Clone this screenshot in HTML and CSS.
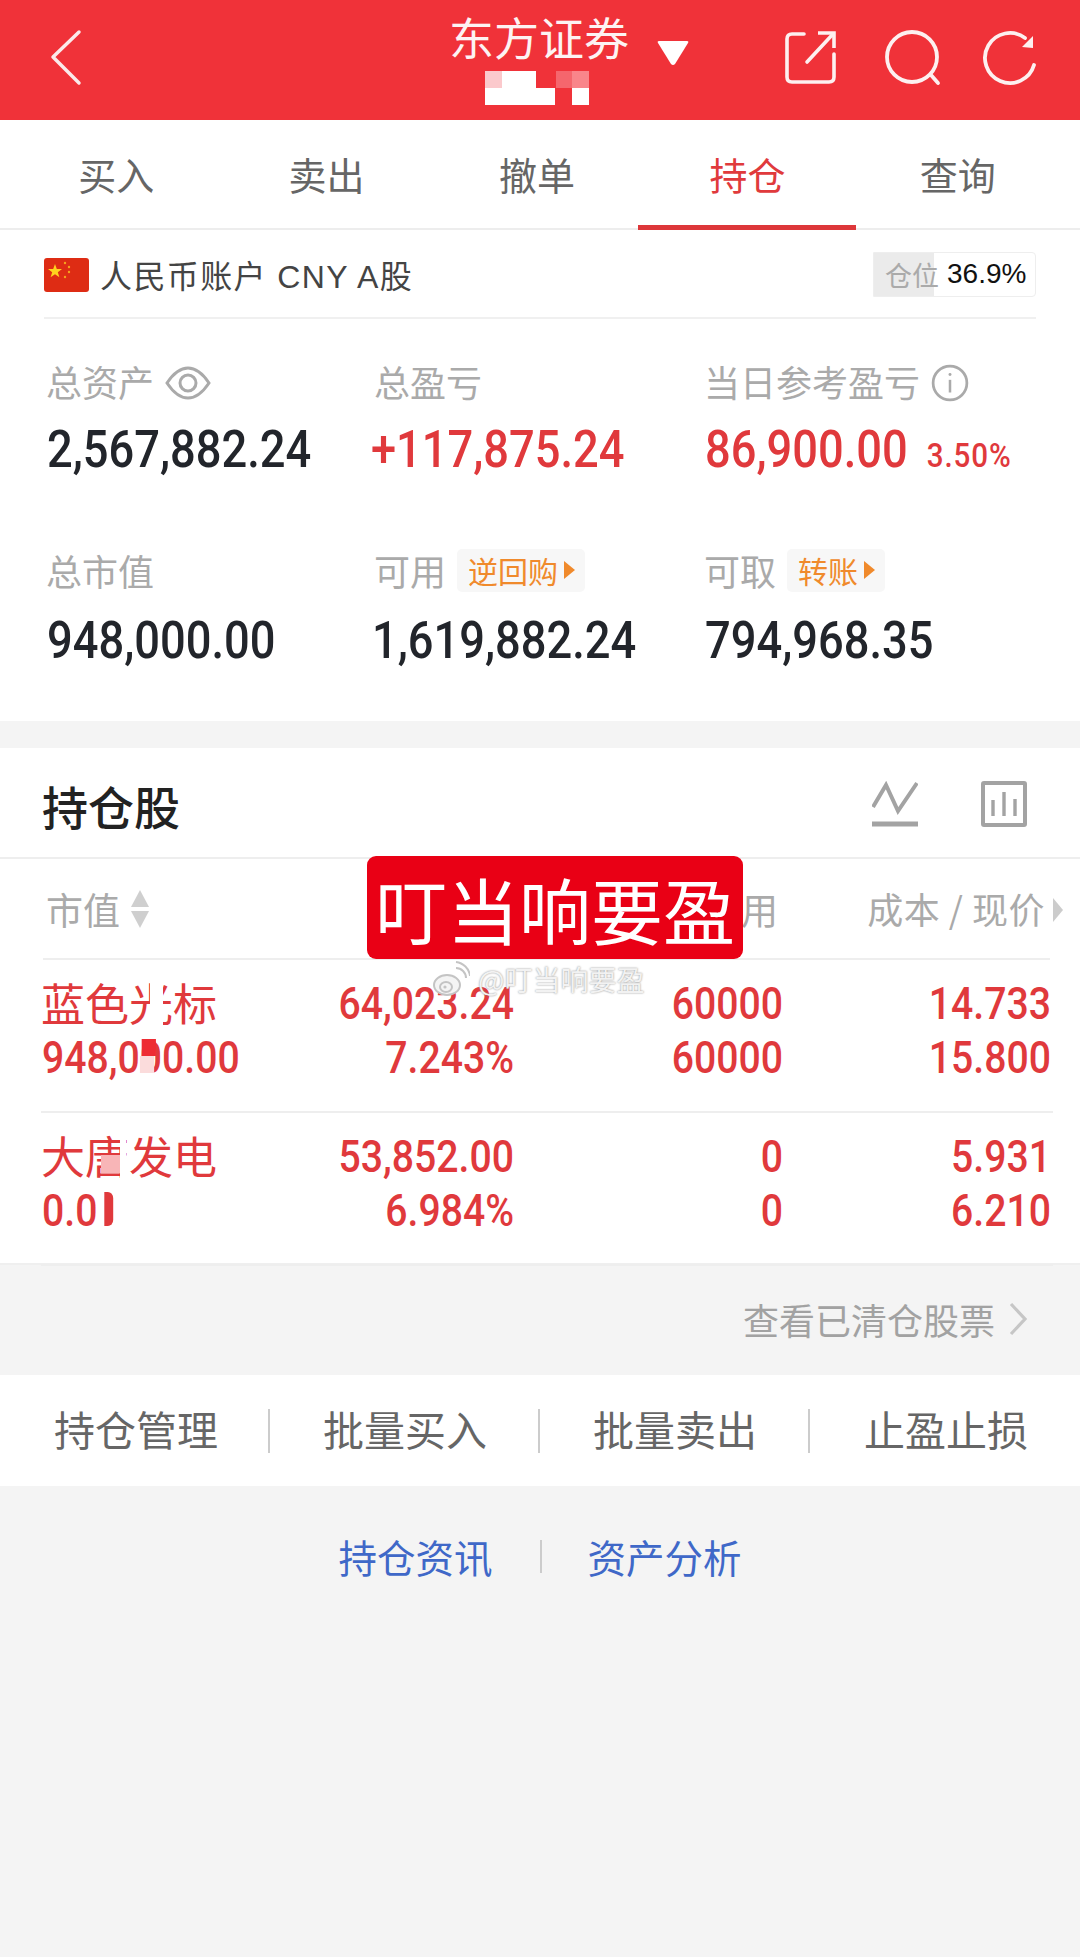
FILE: index.html
```html
<!DOCTYPE html>
<html lang="zh-CN">
<head>
<meta charset="utf-8">
<title>持仓</title>
<link rel="stylesheet" href="styles.css">
</head>
<body>
<div class="page">
  <header class="topbar">
    <svg class="ico-back" width="40" height="120" viewBox="0 0 40 120"><polyline points="31,32 5,57 31,83" fill="none" stroke="#fbeaea" stroke-width="3.5" stroke-linecap="round" stroke-linejoin="round"/></svg>
    <div class="title-wrap">
      <div class="title">东方证券</div>
      <svg class="mosaic" width="104" height="35" viewBox="0 0 104 35" shape-rendering="crispEdges">
        <rect x="0" y="0" width="17" height="17" fill="#fbc9cc"/><rect x="17" y="0" width="34" height="17" fill="#fff"/>
        <rect x="0" y="17" width="70" height="17" fill="#fff"/><rect x="71" y="0" width="17" height="17" fill="#f5666d"/>
        <rect x="87" y="0" width="17" height="17" fill="#f9858a"/><rect x="87" y="17" width="17" height="17" fill="#fff"/>
      </svg>
      <svg class="caret" width="32" height="26" viewBox="0 0 32 26"><path d="M2 1 H30 Q32 1 31 3 L18 24 Q16 26 14 24 L1 3 Q0 1 2 1Z" fill="#fff"/></svg>
    </div>
    <div class="top-icons">
      <svg class="ico-share" width="52" height="54" viewBox="0 0 52 54" fill="none" stroke="#fdf0f0" stroke-width="3.6" stroke-linecap="round" stroke-linejoin="round"><path d="M20 4 H8 Q3 4 3 9 V47 Q3 52 8 52 H45 Q50 52 50 47 V24"/><path d="M23 32 L49 4"/><path d="M34 3 H50 V18" stroke-linecap="butt" stroke-linejoin="miter"/></svg>
      <svg width="60" height="58" viewBox="0 0 60 58" fill="none" stroke="#fdf0f0" stroke-width="3.8" stroke-linecap="round"><circle cx="28" cy="27" r="25"/><path d="M47 45 L54 53"/></svg>
      <svg width="56" height="58" viewBox="0 0 56 58" fill="none"><path d="M51 35 A25 25 0 1 1 42 8" stroke="#fdf0f0" stroke-width="3.8" stroke-linecap="round"/><path d="M50 6 V18 L39 17Z" fill="#fdf0f0"/></svg>
    </div>
  </header>

  <nav class="tabs">
    <a class="tab">买入</a>
    <a class="tab">卖出</a>
    <a class="tab">撤单</a>
    <a class="tab tab-on">持仓</a>
    <a class="tab">查询</a>
  </nav>

  <section class="summary">
    <div class="account">
      <svg class="flag" width="45" height="34" viewBox="0 0 45 34"><rect width="45" height="34" rx="3" fill="#de2c14"/><polygon points="11,6 12.8,11 18,11 13.8,14.2 15.4,19.2 11,16.2 6.6,19.2 8.2,14.2 4,11 9.2,11" fill="#ffd21e"/><circle cx="21" cy="5" r="1.2" fill="#f5a21e"/><circle cx="25" cy="9" r="1.2" fill="#f5a21e"/><circle cx="25" cy="14" r="1.2" fill="#f5a21e"/><circle cx="21" cy="19" r="1.2" fill="#f5a21e"/></svg>
      <span class="acct-name">人民币账户 CNY A股</span>
      <div class="position"><div class="position-fill" style="width:37.4%"></div><span class="position-label">仓位</span><span class="position-value">36.9%</span></div>
    </div>
    <div class="stats">
      <div class="stat">
        <div class="label">总资产<svg class="ico-eye" width="46" height="34" viewBox="0 0 46 34" fill="none" stroke="#aaa" stroke-width="3"><path d="M2 17 C10 5 17 2 23 2 S36 5 44 17 C36 29 29 32 23 32 S10 29 2 17Z"/><circle cx="23" cy="17" r="8"/></svg></div>
        <div class="num dark">2,567,882.24</div>
      </div>
      <div class="stat">
        <div class="label">总盈亏</div>
        <div class="num red plus">+117,875.24</div>
      </div>
      <div class="stat">
        <div class="label">当日参考盈亏<svg class="ico-info" width="38" height="38" viewBox="0 0 36 36" fill="none" stroke="#aaa" stroke-width="2.6"><circle cx="18" cy="18" r="16"/><path d="M18 15 V27" stroke-width="2.4"/><circle cx="18" cy="10" r="1.4" fill="#aaa" stroke="none"/></svg></div>
        <div class="num red">86,900.00<span class="pct">3.50%</span></div>
      </div>
      <div class="stat stat-low">
        <div class="label">总市值</div>
        <div class="num dark">948,000.00</div>
      </div>
      <div class="stat stat-low">
        <div class="label">可用<span class="chip">逆回购<i class="chip-arrow"></i></span></div>
        <div class="num dark num-shift">1,619,882.24</div>
      </div>
      <div class="stat stat-low">
        <div class="label">可取<span class="chip">转账<i class="chip-arrow"></i></span></div>
        <div class="num dark">794,968.35</div>
      </div>
    </div>
  </section>

  <section class="holdings">
    <div class="hold-head">
      <h2 class="hold-title">持仓股</h2>
      <svg class="ico-line" width="46" height="46" viewBox="0 0 46 46" fill="none" stroke="#a3a3a3"><path d="M1 26 L14 4 L26 30 L45 2" stroke-width="4"/><path d="M0 43 H46" stroke-width="5"/></svg>
      <svg class="ico-bars" width="46" height="46" viewBox="0 0 46 46" fill="none" stroke="#a3a3a3"><rect x="2" y="2" width="42" height="42" rx="1" stroke-width="4"/><path d="M12 19 V35 M23 11 V35 M34 18 V35" stroke-width="3.4"/></svg>
    </div>
    <div class="col-head">
      <div class="sort-cell">市值<svg class="ico-sort" width="20" height="38" viewBox="0 0 20 38" fill="#cfcfcf"><polygon points="10,0 19,17 1,17"/><polygon points="1,21 19,21 10,38"/></svg></div>
      <div class="r"></div>
      <div class="r avail-cell">用</div>
      <div class="r cost-cell">成本 / 现价<i class="col-arrow"></i></div>
    </div>
    <div class="row">
      <div class="name">蓝色光标<i class="patch patch-a"></i></div>
      <div class="v">64,023.24</div>
      <div class="v">60000</div>
      <div class="v">14.733</div>
      <div class="name-num">948,000.00<i class="patch patch-b"></i><i class="patch patch-c"></i></div>
      <div class="v">7.243%</div>
      <div class="v">60000</div>
      <div class="v">15.800</div>
    </div>
    <div class="row">
      <div class="name">大唐发电<i class="patch patch-d"></i><i class="patch patch-e"></i></div>
      <div class="v">53,852.00</div>
      <div class="v">0</div>
      <div class="v">5.931</div>
      <div class="name-num">0.0<i class="patch patch-f"></i></div>
      <div class="v">6.984%</div>
      <div class="v">0</div>
      <div class="v">6.210</div>
    </div>
    <div class="stamp">叮当响要盈</div>
    <div class="watermark">
      <svg width="38" height="38" viewBox="0 0 38 38" fill="none" stroke="#c4c4c4" stroke-width="2"><ellipse cx="15" cy="25" rx="13" ry="10" fill="#f4f4f4"/><ellipse cx="14" cy="27" rx="6" ry="5"/><circle cx="13" cy="27" r="1.6" fill="#c4c4c4" stroke="none"/><path d="M24 8 A10 10 0 0 1 34 18 M24 2 A16 16 0 0 1 38 16"/></svg>
      <span>@叮当响要盈</span>
    </div>
  </section>

  <div class="cleared">查看已清仓股票<svg width="20" height="34" viewBox="0 0 20 34" fill="none" stroke="#c6c6c6" stroke-width="3.2"><polyline points="3,2 17,17 3,32"/></svg></div>

  <div class="actions">
    <a class="action">持仓管理</a>
    <a class="action">批量买入</a>
    <a class="action">批量卖出</a>
    <a class="action">止盈止损</a>
  </div>

  <div class="links">
    <a class="link">持仓资讯</a>
    <i class="link-sep"></i>
    <a class="link">资产分析</a>
  </div>
</div>
</body>
</html>
```

FILE: styles.css
```css
* { box-sizing: border-box; }
html, body { margin: 0; padding: 0; }
body {
  width: 1080px;
  height: 1957px;
  overflow: hidden;
  background: #f4f4f4;
  font-family: "Noto Sans CJK SC", "Liberation Sans", sans-serif;
}
.page { width: 1080px; min-height: 1957px; background: #f4f4f4; }

/* top bar */
.topbar {
  height: 120px;
  background: #f03239;
  display: grid;
  grid-template-columns: 1fr auto 1fr;
  color: #fff;
}
.ico-back { margin-left: 48px; }
.title-wrap { position: relative; width: 180px; display: flex; flex-direction: column; align-items: center; }
.title { font-size: 45px; line-height: 48px; margin-top: 13px; margin-left: -2px; white-space: nowrap; color: #fdf3f3; }
.mosaic { margin-top: 10px; margin-left: -6px; }
.caret { position: absolute; left: 207px; top: 40px; }
.top-icons { display: flex; justify-content: flex-end; align-items: flex-start; padding: 30px 41px 0 0; gap: 39px; }
.ico-share { margin-right: 9px; }

/* tabs */
.tabs {
  height: 110px;
  background: #fff;
  border-bottom: 2px solid #ededed;
  display: flex;
  padding: 0 17px 0 11px;
}
.tab {
  flex: 1;
  text-align: center;
  font-size: 38px;
  line-height: 108px;
  color: #666;
  position: relative;
  height: 110px;
}
.tab-on { color: #e03a3c; }
.tab-on::after { content: ""; position: absolute; left: -4px; right: -3px; bottom: 0; height: 5px; background: #dd373a; }

/* summary */
.summary { background: #fff; height: 491px; padding: 0 44px; }
.account { height: 89px; display: flex; align-items: center; border-bottom: 2px solid #f0f0f0; padding-top: 1px; }
.flag { flex: none; margin-top: 2px; }
.acct-name { margin-left: 11px; margin-bottom: 1px; font-size: 32px; letter-spacing: 1.4px; color: #444; font-family: "Liberation Sans", "Noto Sans CJK SC", sans-serif; flex: 1; white-space: nowrap; }
.position {
  position: relative; width: 163px; height: 45px; border: 1px solid #eee; border-radius: 0 4px 4px 0;
  display: flex; align-items: center; padding-left: 11px; white-space: nowrap;
}
.position-fill { position: absolute; left: 0; top: 0; bottom: 0; background: #ebebeb; }
.position-label { position: relative; font-size: 27px; color: #aaa; }
.position-value { position: relative; font-size: 28px; color: #111; margin-left: 8px; font-family: "Liberation Sans", sans-serif; }

.stats { display: grid; grid-template-columns: 330px 330px 1fr; padding-left: 2px; padding-top: 40px; }
.stats .stat:nth-child(3n+2) { margin-left: -2px; }
.stats .stat:nth-child(3n) { margin-left: -2px; }
.stat { height: 189px; }
.stat-low { height: 160px; }
.label { display: flex; align-items: center; height: 44px; font-size: 36px; color: #aaa; white-space: nowrap; }
.ico-eye { margin-left: 11px; margin-top: 3px; }
.ico-info { margin-left: 11px; margin-top: 3px; }
.num {
  font-family: Roboto, "Liberation Sans", sans-serif;
  font-weight: 500;
  font-size: 52px;
  line-height: 60px;
  margin-top: 17px;
  margin-left: 1px;
  white-space: nowrap;
  transform: scaleX(0.87);
  transform-origin: left center;
}
.stat-low .num { margin-top: 19px; }
.num-shift { margin-left: -2px; }
.dark { color: #22252b; }
.red { color: #e0393c; }
.plus { margin-left: -3px; }
.pct { font-size: 34px; letter-spacing: 1px; margin-left: 22px; }
.chip {
  display: inline-flex; align-items: center; height: 43px; margin-left: 11px; padding: 0 10px 0 11px;
  background: #f7f7f7; border-radius: 5px; font-size: 30px; color: #f08a2c;
}
.chip-arrow { width: 0; height: 0; margin-left: 6px; border-left: 11px solid #f08a2c; border-top: 9px solid transparent; border-bottom: 9px solid transparent; }

/* holdings */
.holdings { position: relative; margin-top: 27px; background: #fff; height: 517px; border-bottom: 2px solid #efefef; }
.hold-head { height: 111px; display: flex; align-items: center; padding: 0 53px 0 42px; border-bottom: 2px solid #eee; }
.hold-title { margin: 5px auto 0 0; font-size: 46px; font-weight: 500; color: #222; }
.ico-line { margin-top: 2px; }
.ico-bars { margin-left: 63px; margin-top: 2px; }
.col-head {
  height: 101px; margin: 0 30px 0 43px; border-bottom: 2px solid #eee;
  display: grid; grid-template-columns: 240px 230px 269px 268px; align-items: center;
  font-size: 37px; color: #aaa; white-space: nowrap;
}
.sort-cell { display: flex; align-items: center; padding-left: 3px; }
.ico-sort { margin-left: 10px; }
.r { text-align: right; }
.avail-cell { padding-right: 4px; }
.cost-cell { position: relative; padding-right: 5px; padding-bottom: 2px; font-size: 36px; letter-spacing: 0.5px; }
.col-arrow { position: absolute; right: -13px; top: 16px; border-left: 10px solid #ccc; border-top: 12px solid transparent; border-bottom: 12px solid transparent; }
.row {
  height: 153px; margin: 0 27px 0 41px; padding: 17px 3px 0 1px;
  display: grid; grid-template-columns: 242px 230px 269px 268px; grid-auto-rows: 54px;
  border-bottom: 2px solid #eee; color: #e0393c;
}
.row:last-of-type { border-bottom: 0; }
.name { position: relative; font-size: 44px; line-height: 54px; margin: -2px 0 0 -1px; white-space: nowrap; }
.name-num, .v {
  font-family: Roboto, "Liberation Sans", sans-serif;
  font-size: 44px; line-height: 54px; font-weight: 500; white-space: nowrap;
  transform: scaleX(0.89);
}
.name-num { position: relative; transform-origin: left center; }
.v { text-align: right; transform-origin: right center; }
.patch { position: absolute; display: block; }
.patch-a { left: 109px; top: 0; width: 13px; height: 54px; background: #fff; }
.patch-b { left: 110px; top: 25px; width: 16px; height: 17px; background: #fbdcdc; }
.patch-c { left: 112px; top: 8px; width: 16px; height: 17px; background: #ee2c34; }
.patch-d { left: 60px; top: 27px; width: 19px; height: 18px; background: #f8b5b7; }
.patch-e { left: 79px; top: 0; width: 6px; height: 50px; background: #fff; }
.patch-f { left: 70px; top: 8px; width: 10px; height: 34px; background: #e0393c; border-radius: 0 6px 6px 0; }

.stamp {
  position: absolute; left: 367px; top: 108px; width: 376px; height: 103px;
  background: #e90015; border-radius: 9px; color: #fff;
  font-size: 72px; line-height: 103px; text-align: center; white-space: nowrap;
}
.watermark { position: absolute; left: 432px; top: 212px; display: flex; align-items: center; color: #f2f2f2; font-size: 28px; line-height: 36px; text-shadow: 0 0 2px #888; white-space: nowrap; }
.watermark span { margin-left: 8px; }

/* footer */
.cleared { height: 110px; display: flex; justify-content: flex-end; align-items: center; padding: 0 52px 3px 0; font-size: 36px; color: #a2a2a2; }
.cleared svg { margin-left: 13px; }
.actions { height: 111px; background: #fff; display: grid; grid-template-columns: repeat(4, 1fr); align-items: center; }
.action { text-align: center; font-size: 41px; line-height: 39px; padding: 0 0 5px 2px; color: #666; border-right: 2px solid #ccc; white-space: nowrap; }
.action:first-child { padding-left: 4px; }
.action:last-child { border-right: 0; }
.links { display: flex; justify-content: center; align-items: center; height: 143px; padding-bottom: 3px; color: #3f68c8; font-size: 38.5px; }
.link { line-height: 50px; }
.link-sep { width: 2px; height: 33px; background: #ccc; margin: 0 46px 0 47px; }
```
